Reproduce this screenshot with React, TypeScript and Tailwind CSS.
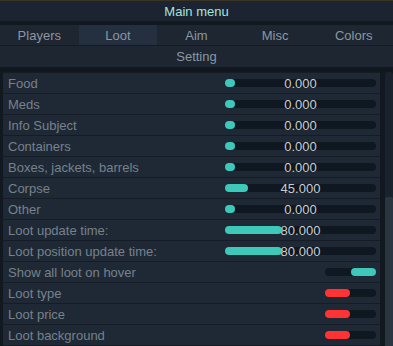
import React from 'react';

type Row =
  | { label: string; kind: 'slider'; value: string; fill: number }
  | { label: string; kind: 'toggle'; on: boolean; color: string };

const rows: Row[] = [
  { label: 'Food', kind: 'slider', value: '0.000', fill: 10 },
  { label: 'Meds', kind: 'slider', value: '0.000', fill: 10 },
  { label: 'Info Subject', kind: 'slider', value: '0.000', fill: 10 },
  { label: 'Containers', kind: 'slider', value: '0.000', fill: 10 },
  { label: 'Boxes, jackets, barrels', kind: 'slider', value: '0.000', fill: 10 },
  { label: 'Corpse', kind: 'slider', value: '45.000', fill: 23 },
  { label: 'Other', kind: 'slider', value: '0.000', fill: 10 },
  { label: 'Loot update time:', kind: 'slider', value: '80.000', fill: 57 },
  { label: 'Loot position update time:', kind: 'slider', value: '80.000', fill: 57 },
  { label: 'Show all loot on hover', kind: 'toggle', on: true, color: 'bg-[#3ec8b9]' },
  { label: 'Loot type', kind: 'toggle', on: false, color: 'bg-[#ff3333]' },
  { label: 'Loot price', kind: 'toggle', on: false, color: 'bg-[#ff3333]' },
  { label: 'Loot background', kind: 'toggle', on: false, color: 'bg-[#ff3333]' },
];

const tabs = ['Players', 'Loot', 'Aim', 'Misc', 'Colors'];

export default function App() {
  return (
    <div className="w-[393px] h-[346px] overflow-hidden bg-[#111820] font-['Liberation_Sans',Arial,sans-serif] text-[13px] leading-none">
      <div className="h-[21px] border-t border-[#3a3424] bg-[#1b2430] flex items-center justify-center text-[#a4e4de]">
        Main menu
      </div>
      <div className="h-[4px]" />
      <div className="grid grid-cols-5 h-[21px] bg-[#1d2631] border-b border-[#141b24] text-[#8c97a2]">
        {tabs.map((t) => (
          <div
            key={t}
            className={`flex items-center justify-center ${t === 'Loot' ? 'bg-[#243040]' : ''}`}
          >
            {t}
          </div>
        ))}
      </div>
      <div className="h-[21px] bg-[#1d2631] flex items-center justify-center text-[#8c97a2]">
        Setting
      </div>
      <div className="flex pt-[5px]">
        <div className="w-[3px] shrink-0" />
        <div className="w-[377px] flex flex-col border-t border-[#151c25]">
          {rows.map((r) => (
            <div
              key={r.label}
              className="h-[21px] shrink-0 bg-[#1f2935] border-b border-[#151c25] flex items-center pl-[5px] pr-[4px]"
            >
              <span className="flex-1 text-[#76818c] whitespace-nowrap">{r.label}</span>
              {r.kind === 'slider' ? (
                <div className="relative w-[151px] h-[8px] rounded-full bg-[#0f1720]">
                  <div
                    className="h-full rounded-full bg-[#3ec8b9]"
                    style={{ width: `${r.fill}px` }}
                  />
                  <span className="absolute inset-0 flex items-center justify-center text-[#c9cdd1]">
                    {r.value}
                  </span>
                </div>
              ) : (
                <div className={`w-[51px] h-[8px] rounded-full bg-[#0f1720] flex ${r.on ? 'justify-end' : 'justify-start'}`}>
                  <div className={`w-[25px] h-full rounded-full ${r.color}`} />
                </div>
              )}
            </div>
          ))}
        </div>
        <div className="w-[5px] shrink-0" />
        <div className="w-[8px] shrink-0 flex flex-col rounded-t-[3px] bg-[#1a222d] h-[280px]">
          <div className="h-[125px] shrink-0" />
          <div className="flex-1 bg-[#2b3441] rounded-t-[2px]" />
        </div>
      </div>
    </div>
  );
}
